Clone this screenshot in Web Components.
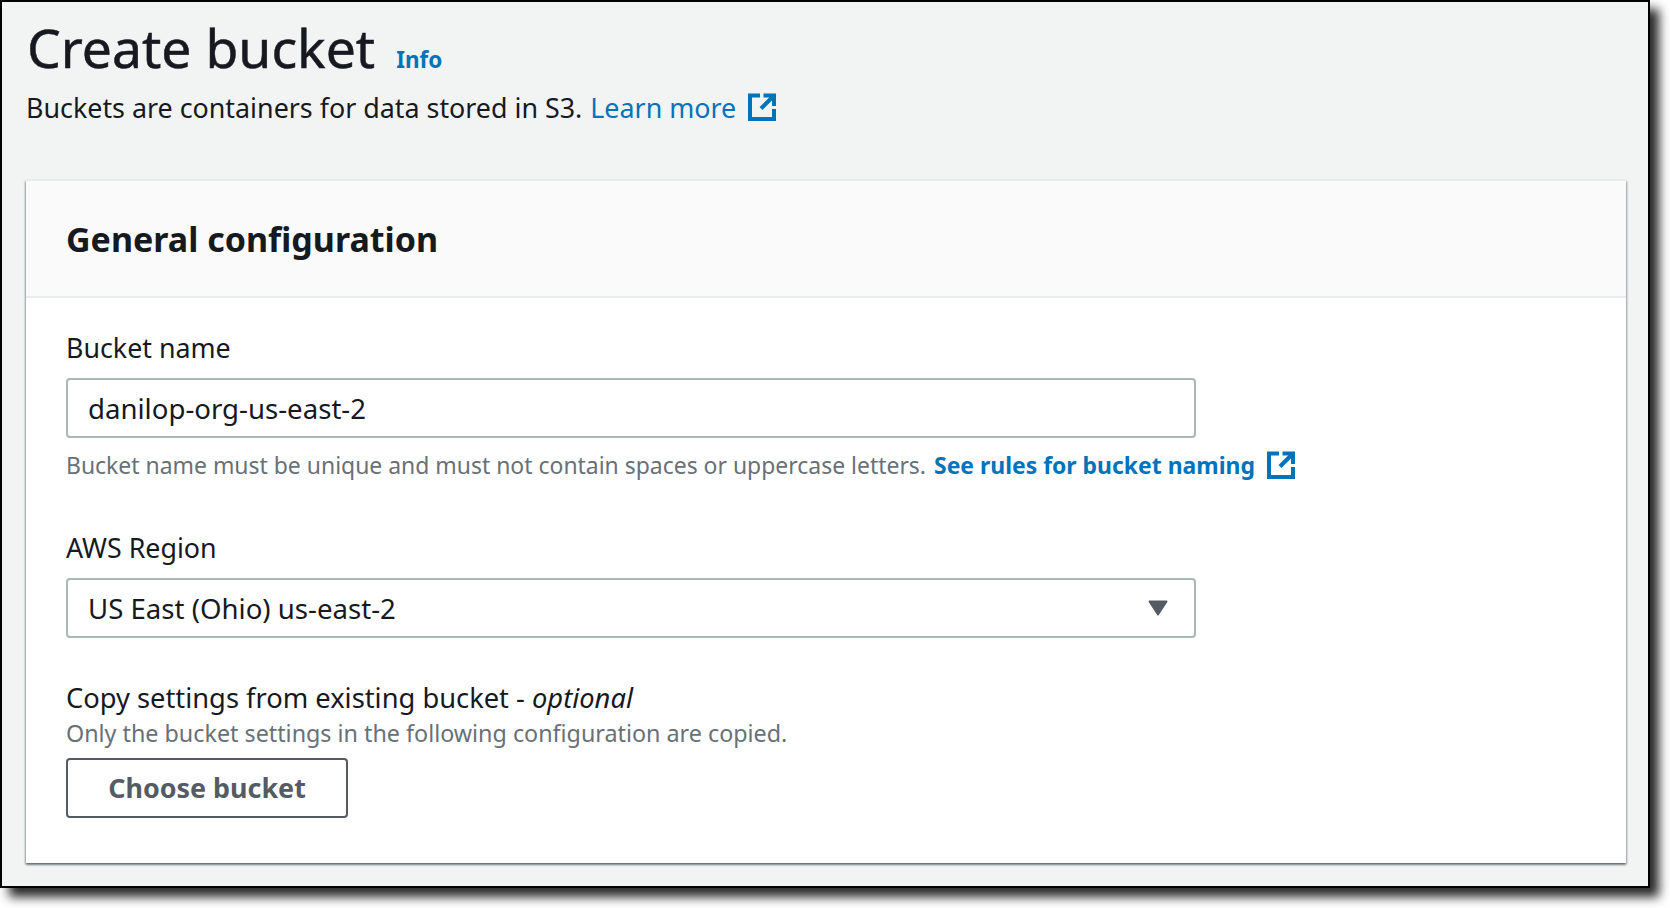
<!DOCTYPE html>
<html lang="en">
<head>
<meta charset="utf-8">
<title>Create bucket</title>
<style>
    html, body {
        margin: 0;
        height: 908px;
        background: #fff;
        overflow: hidden;
        font-family: "Noto Sans", "Liberation Sans", sans-serif;
    }
</style>
</head>
<body>
<page-frame>
    <page-title link="Info">Create bucket</page-title>
    <page-desc link="Learn more">Buckets are containers for data stored in S3.</page-desc>
    <config-card heading="General configuration">
        <form-field label="Bucket name">
            <value-box value="danilop-org-us-east-2"></value-box>
            <field-hint link="See rules for bucket naming">Bucket name must be unique and must not contain spaces or uppercase letters.</field-hint>
        </form-field>
        <form-field label="AWS Region" class="region">
            <value-box value="US East (Ohio) us-east-2" select></value-box>
        </form-field>
        <copy-field></copy-field>
    </config-card>
</page-frame>

<script>
const EXTERNAL_ICON = `
    <svg viewBox="0 0 28 28" width="28" height="28" fill="none" stroke="currentColor" stroke-width="4">
        <path d="M12 2.5H2v23.5h24V16"/>
        <path d="M15.5 2.5h10.5V13"/>
        <path d="M25.5 3L13 15.5"/>
    </svg>`;

class PageFrame extends HTMLElement {
    connectedCallback() {
        this.attachShadow({ mode: "open" }).innerHTML = `
        <style>
            :host {
                display: block;
                box-sizing: border-box;
                width: 1650px;
                height: 888px;
                padding: 14px 22px 0 24px;
                background: #f2f3f3;
                border: 2px solid #000;
                box-shadow: 9px 9px 10px #2a2a2a;
            }
        </style>
        <slot></slot>`;
    }
}

class PageTitle extends HTMLElement {
    connectedCallback() {
        this.attachShadow({ mode: "open" }).innerHTML = `
        <style>
            :host { display: flex; align-items: baseline; gap: 21px; height: 64px; padding-left: 1px; }
            h1 { margin: 0; font-size: 53.5px; line-height: 64px; font-weight: 400; color: #16191f; -webkit-text-stroke: .5px #16191f; }
            a { font-size: 22.5px; font-weight: 700; color: #0073bb; text-decoration: none; }
        </style>
        <h1><slot></slot></h1>
        <a href="#">${this.getAttribute("link")}</a>`;
    }
}

class PageDesc extends HTMLElement {
    connectedCallback() {
        this.attachShadow({ mode: "open" }).innerHTML = `
        <style>
            :host { display: flex; align-items: center; height: 36px; margin: 9px 0 55px; font-size: 26.85px; color: #16191f; white-space: nowrap; }
            a { margin-left: 8px; color: #0073bb; text-decoration: none; }
            svg { display: block; margin-left: 12px; color: #0073bb; }
        </style>
        <span><slot></slot></span>
        <a href="#">${this.getAttribute("link")}</a>
        ${EXTERNAL_ICON}`;
    }
}

class ConfigCard extends HTMLElement {
    connectedCallback() {
        this.attachShadow({ mode: "open" }).innerHTML = `
        <style>
            :host {
                display: block;
                background: #fff;
                border-top: 1px solid #eaeded;
                box-shadow: 0 2px 2px rgba(0, 28, 36, .4), 1px 1px 2px rgba(0, 28, 36, .25), -1px 1px 2px rgba(0, 28, 36, .25);
            }
            header {
                box-sizing: border-box;
                height: 117px;
                padding: 0 40px;
                display: flex;
                align-items: center;
                background: #fafafa;
                border-bottom: 2px solid #eaeded;
            }
            h2 { margin: 0; font-size: 34px; font-weight: 700; color: #16191f; }
            .body { padding: 32px 40px 45px; }
        </style>
        <header><h2>${this.getAttribute("heading")}</h2></header>
        <div class="body"><slot></slot></div>`;
    }
}

class FormField extends HTMLElement {
    connectedCallback() {
        this.attachShadow({ mode: "open" }).innerHTML = `
        <style>
            :host { display: block; }
            :host(.region) { margin-top: 45px; }
            label { display: block; height: 36px; margin-bottom: 12px; font-size: 26.8px; line-height: 36px; color: #16191f; }
        </style>
        <label>${this.getAttribute("label")}</label>
        <slot></slot>`;
    }
}

class ValueBox extends HTMLElement {
    connectedCallback() {
        const arrow = this.hasAttribute("select") ? `
            <svg viewBox="0 0 20 16" width="20" height="16"><path d="M1.5 1.5h17L10 14.5z" fill="#545b64" stroke="#545b64" stroke-width="2" stroke-linejoin="round"/></svg>` : "";
        this.attachShadow({ mode: "open" }).innerHTML = `
        <style>
            :host {
                display: flex;
                align-items: center;
                justify-content: space-between;
                box-sizing: border-box;
                width: 1130px;
                height: 60px;
                padding: 0 26px 1px 20px;
                background: #fff;
                border: 2px solid #aab7b8;
                border-radius: 4px;
                font-size: 27.6px;
                color: #16191f;
            }
        </style>
        <span>${this.getAttribute("value")}</span>${arrow}`;
    }
}

class FieldHint extends HTMLElement {
    connectedCallback() {
        this.attachShadow({ mode: "open" }).innerHTML = `
        <style>
            :host { display: flex; align-items: center; height: 40px; margin-top: 7px; font-size: 22.95px; color: #687078; white-space: nowrap; }
            a { margin-left: 8px; font-weight: 700; color: #0073bb; text-decoration: none; }
            svg { display: block; margin-left: 12px; color: #0073bb; }
        </style>
        <span><slot></slot></span>
        <a href="#">${this.getAttribute("link")}</a>
        ${EXTERNAL_ICON}`;
    }
}

class CopyField extends HTMLElement {
    connectedCallback() {
        this.attachShadow({ mode: "open" }).innerHTML = `
        <style>
            :host { display: block; margin-top: 42px; }
            .label { height: 36px; margin-bottom: 2px; font-size: 27.3px; line-height: 36px; color: #16191f; }
            .hint { height: 30px; margin-bottom: 10px; font-size: 23.3px; line-height: 30px; color: #687078; }
            button {
                display: block;
                box-sizing: border-box;
                width: 282px;
                height: 60px;
                padding: 0 0 2px;
                background: #fff;
                border: 2px solid #545b64;
                border-radius: 4px;
                font: 700 26.9px "Noto Sans", "Liberation Sans", sans-serif;
                color: #545b64;
            }
        </style>
        <div class="label">Copy settings from existing bucket - <i>optional</i></div>
        <div class="hint">Only the bucket settings in the following configuration are copied.</div>
        <button type="button">Choose bucket</button>`;
    }
}

customElements.define("page-frame", PageFrame);
customElements.define("page-title", PageTitle);
customElements.define("page-desc", PageDesc);
customElements.define("config-card", ConfigCard);
customElements.define("form-field", FormField);
customElements.define("value-box", ValueBox);
customElements.define("field-hint", FieldHint);
customElements.define("copy-field", CopyField);
</script>
</body>
</html>
